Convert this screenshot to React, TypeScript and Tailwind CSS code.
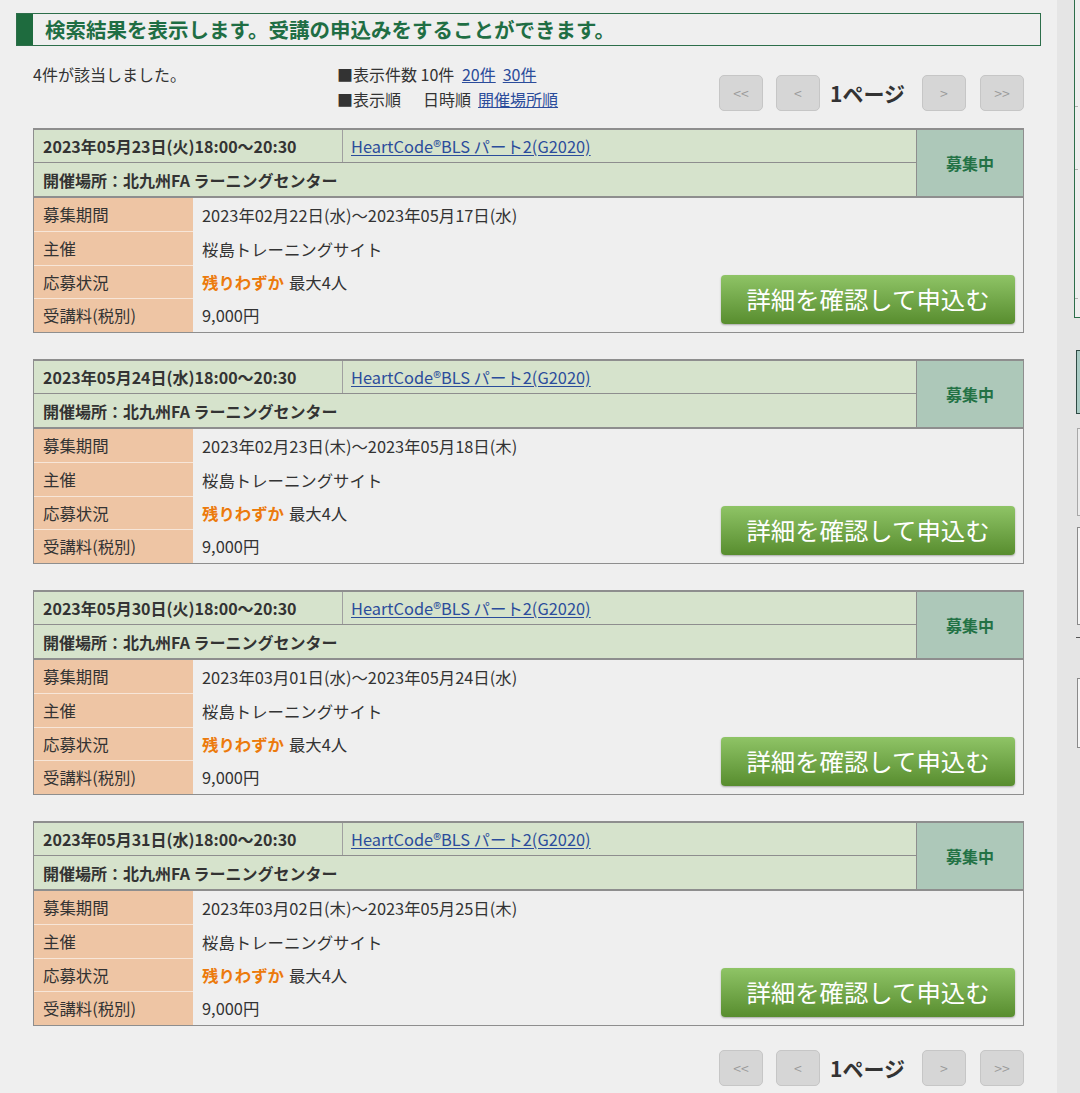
import React from "react";

type Course = {
  date: string;
  period: string;
};

const courses: Course[] = [
  { date: "2023年05月23日(火)18:00〜20:30", period: "2023年02月22日(水)〜2023年05月17日(水)" },
  { date: "2023年05月24日(水)18:00〜20:30", period: "2023年02月23日(木)〜2023年05月18日(木)" },
  { date: "2023年05月30日(火)18:00〜20:30", period: "2023年03月01日(水)〜2023年05月24日(水)" },
  { date: "2023年05月31日(水)18:00〜20:30", period: "2023年03月02日(木)〜2023年05月25日(木)" },
];

function PageBtn({ label }: { label: string }) {
  return (
    <div className="w-[44px] h-[36px] rounded-[5px] bg-[#d6d6d6] border border-[#c6c6c6] flex items-center justify-center text-[14px] text-[#9a9a9a]">
      {label}
    </div>
  );
}

function Pager() {
  return (
    <div className="flex items-center">
      <PageBtn label="<<" />
      <div className="ml-[13px]">
        <PageBtn label="<" />
      </div>
      <div className="ml-[10px] w-[92px] text-[21px] font-bold text-[#333] leading-none">1ページ</div>
      <PageBtn label=">" />
      <div className="ml-[14px]">
        <PageBtn label=">>" />
      </div>
    </div>
  );
}

function Row({ label, children, h, last }: { label: string; children: React.ReactNode; h: string; last?: boolean }) {
  return (
    <div className={"flex " + h}>
      <div
        className={
          "w-[159px] shrink-0 bg-[#eec5a4] pl-[9px] flex items-center " +
          (last ? "" : "border-b border-[#f7e6d8]")
        }
      >
        {label}
      </div>
      <div className="flex-1 pl-[9px] flex items-center">{children}</div>
    </div>
  );
}

function Card({ c }: { c: Course }) {
  return (
    <div className="w-[991px] border border-[#8e8e8e] border-t-2 text-[16.4px] text-[#333]">
      <div className="flex bg-[#d6e3cc] border-b-2 border-[#8e8e8e]">
        <div className="flex-1">
          <div className="flex h-[33px] border-b border-[#8e8e8e]">
            <div className="w-[309px] border-r border-[#a0a0a0] pl-[9px] flex items-center font-bold text-[16px]">{c.date}</div>
            <div className="flex-1 pl-[8px] flex items-center">
              <span className="text-[#2b4c9b] underline underline-offset-2">HeartCode®BLS パート2(G2020)</span>
            </div>
          </div>
          <div className="h-[33px] pl-[9px] flex items-center font-bold text-[16px]">開催場所：北九州FA ラーニングセンター</div>
        </div>
        <div className="w-[107px] border-l border-[#8e8e8e] bg-[#adc8b9] flex items-center justify-center font-bold text-[16px] text-[#237245]">
          募集中
        </div>
      </div>
      <div className="flex bg-[#efefef]">
        <div className="flex-1">
          <Row label="募集期間" h="h-[34px]">{c.period}</Row>
          <Row label="主催" h="h-[34px]">桜島トレーニングサイト</Row>
          <Row label="応募状況" h="h-[33px]">
            <span className="font-bold text-[#ec7a0c]">残りわずか</span>
            <span className="ml-[5px]">最大4人</span>
          </Row>
          <Row label="受講料(税別)" h="h-[33px]" last>
            9,000円
          </Row>
        </div>
        <div className="flex items-end pr-[8px] pb-[8px]">
          <div className="w-[294px] h-[49px] rounded-[4px] bg-gradient-to-b from-[#8fc466] to-[#588d2e] shadow-[0_1px_2px_rgba(0,0,0,0.3)] flex items-center justify-center text-white text-[24.4px]">
            詳細を確認して申込む
          </div>
        </div>
      </div>
    </div>
  );
}

function Sidebar() {
  return (
    <div className="flex-1 bg-[#e5e5e5] overflow-hidden min-h-[1093px]">
      <div className="ml-[17px] w-[100px] h-[318px] border-l border-b border-[#2d6e4a] bg-[#efefef] flex flex-col">
        <div className="h-[107px] border-b border-dashed border-[#b0b0b0]" />
        <div className="h-[63px] border-b border-dashed border-[#b0b0b0]" />
        <div className="h-[129px] border-b border-dashed border-[#b0b0b0]" />
      </div>
      <div className="mt-[32px] ml-[19px] w-[100px] h-[64px] border border-[#2f4a44] bg-[#a9cbc4]" />
      <div className="mt-[14px] ml-[20px] w-[100px] h-[88px] border border-[#a8a8a8] bg-[#ececec]" />
      <div className="mt-[11px] ml-[20px] w-[100px] h-[98px] border border-[#8a8a8a] bg-[#f5f5f5]" />
      <div className="mt-[12px] ml-[19px] w-[6px] h-[1px] bg-[#555]" />
      <div className="mt-[40px] ml-[20px] w-[100px] h-[70px] border border-[#8a8a8a] bg-[#f5f5f5]" />
    </div>
  );
}

export default function App() {
  return (
    <div
      className="flex w-[1080px] min-h-[1093px] bg-[#efefef] text-[#333]"
      style={{ fontFamily: '"Noto Sans CJK JP", "Noto Sans", sans-serif' }}
    >
      <div className="w-[1057px] shrink-0 pt-[13px] pl-[16px]">
        <div className="w-[1025px] h-[33px] border border-[#2d6e4a] flex">
          <div className="w-[16px] bg-[#1e6b3e]" />
          <div className="pl-[12px] flex items-center text-[20.5px] font-bold text-[#1f6e44]">
            検索結果を表示します。受講の申込みをすることができます。
          </div>
        </div>
        <div className="pl-[17px]">
          <div className="mt-[16px] h-[50px] flex w-[991px] text-[16px]">
            <div className="w-[304px] leading-[25px]">4件が該当しました。</div>
            <div className="flex-1 leading-[25px]">
              <div>
                ■表示件数 10件{" "}
                <span className="text-[#2b4c9b] underline ml-[4px]">20件</span>
                <span className="text-[#2b4c9b] underline ml-[7px]">30件</span>
              </div>
              <div>
                ■表示順<span className="ml-[22px]">日時順</span>
                <span className="text-[#2b4c9b] underline ml-[7px]">開催場所順</span>
              </div>
            </div>
            <div className="pt-[13px]">
              <Pager />
            </div>
          </div>
          <div className="mt-[16px] flex flex-col gap-[26px]">
            {courses.map((c, i) => (
              <Card key={i} c={c} />
            ))}
          </div>
          <div className="mt-[24px] w-[991px] flex justify-end">
            <Pager />
          </div>
        </div>
      </div>
      <Sidebar />
    </div>
  );
}
